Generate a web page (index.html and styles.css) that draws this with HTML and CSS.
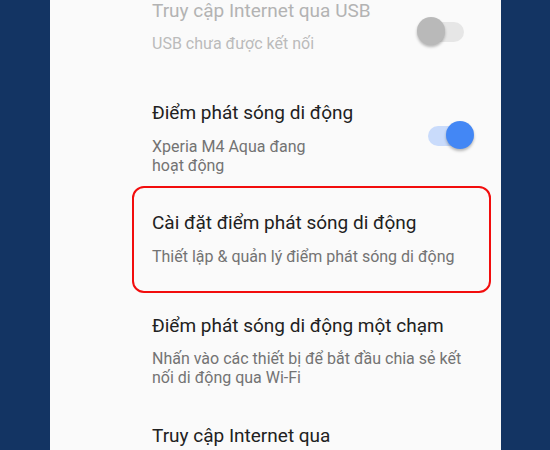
FILE: index.html
```html
<!DOCTYPE html>
<html lang="vi">
<head>
<meta charset="utf-8">
<title>Chia sẻ kết nối</title>
<link rel="stylesheet" href="styles.css">
</head>
<body>
<div class="screen">
  <div class="list">
    <div class="pref disabled">
      <div class="text">
        <div class="title">Truy cập Internet qua USB</div>
        <div class="summary">USB chưa được kết nối</div>
      </div>
      <div class="switch off"><span class="track"></span><span class="thumb"></span></div>
    </div>
    <div class="pref">
      <div class="text">
        <div class="title">Điểm phát sóng di động</div>
        <div class="summary">Xperia M4 Aqua đang<br>hoạt động</div>
      </div>
      <div class="switch on"><span class="track"></span><span class="thumb"></span></div>
    </div>
    <div class="pref highlighted">
      <div class="text">
        <div class="title">Cài đặt điểm phát sóng di động</div>
        <div class="summary">Thiết lập &amp; quản lý điểm phát sóng di động</div>
      </div>
      <span class="mark"></span>
    </div>
    <div class="pref">
      <div class="text">
        <div class="title">Điểm phát sóng di động một chạm</div>
        <div class="summary">Nhấn vào các thiết bị để bắt đầu chia sẻ kết nối di động qua Wi-Fi</div>
      </div>
    </div>
    <div class="pref">
      <div class="text narrow">
        <div class="title">Truy cập Internet qua Bluetooth</div>
        <div class="summary">Không chia sẻ kết nối Internet</div>
      </div>
    </div>
  </div>
</div>
</body>
</html>
```
FILE: styles.css
```css
html, body {
  margin: 0;
  padding: 0;
  height: 100%;
}
body {
  background: #133463;
  font-family: Roboto, "Noto Sans", "Liberation Sans", sans-serif;
  overflow: hidden;
}
.screen {
  margin-left: 50px;
  width: 451px;
  height: 100%;
  background: #fafafa;
  overflow: hidden;
}
.list {
  margin-top: -19.2px;
}
.pref {
  position: relative;
  display: flex;
  align-items: center;
  box-sizing: border-box;
  min-height: 102.4px;
  padding: 18px 27px 18.5px 102px;
}
.text {
  flex: 1;
  min-width: 0;
  align-self: flex-start;
}
.text.narrow {
  padding-right: 65px;
}
.title {
  font-size: 19px;
  line-height: 24px;
  color: #212121;
}
.summary {
  margin-top: 11.5px;
  font-size: 16px;
  line-height: 19px;
  color: #737373;
}
.disabled .title {
  color: #b3b3b3;
}
.disabled .summary {
  color: #bbbbbb;
}
.switch {
  position: relative;
  flex: none;
  width: 57px;
  height: 29px;
  margin-left: 8px;
}
.track {
  position: absolute;
  left: 11px;
  top: 4.5px;
  width: 36px;
  height: 20px;
  border-radius: 10px;
}
.thumb {
  position: absolute;
  top: 0;
  width: 28px;
  height: 28px;
  border-radius: 50%;
  box-shadow: 0 2px 3px rgba(0, 0, 0, 0.28);
}
.off .track {
  background: #e6e6e6;
}
.off .thumb {
  left: 0;
  background: #b9b9b9;
}
.on .track {
  background: #c9dbfb;
}
.on .thumb {
  left: 28.5px;
  background: #4387f5;
}
.on {
  top: -2px;
}
.mark {
  position: absolute;
  left: 82px;
  right: 10px;
  top: -6.8px;
  bottom: 2.8px;
  border: 2.5px solid #f20d0d;
  border-radius: 12px;
}
```
